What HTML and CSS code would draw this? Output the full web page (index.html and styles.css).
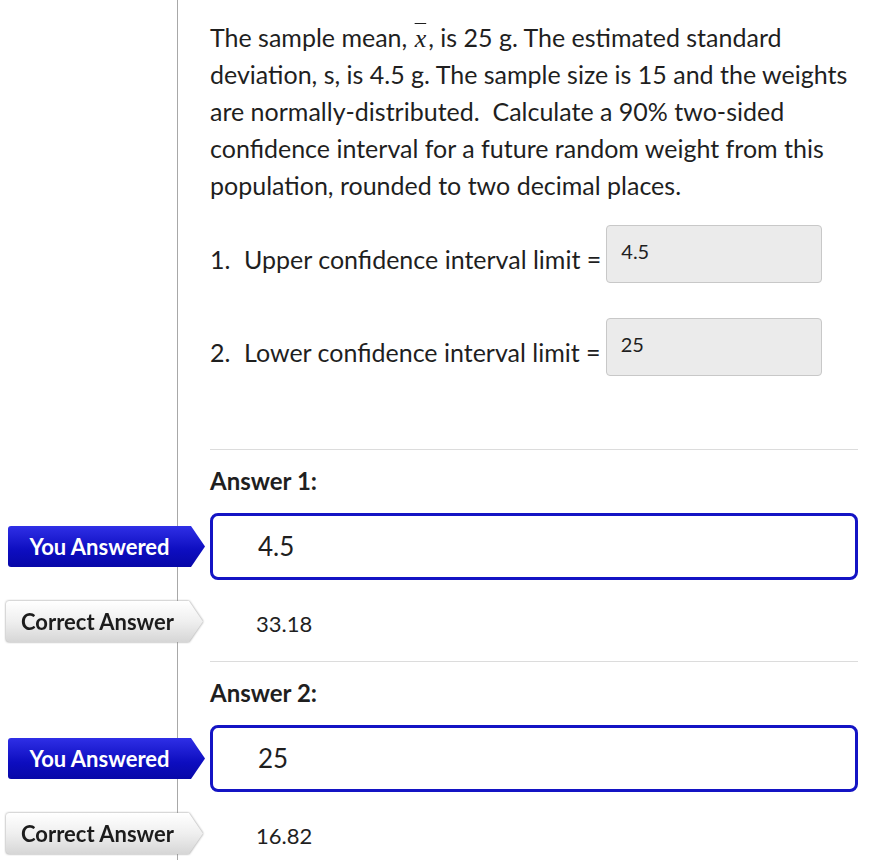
FILE: index.html
```html
<!DOCTYPE html>
<html lang="en">
<head>
    <meta charset="UTF-8">
    <meta name="viewport" content="width=device-width, initial-scale=1.0">
    <title>Quiz Results</title>
    <link rel="stylesheet" href="styles.css">
</head>
<body>
    <div class="quiz">
        <div class="question">
            <p class="prompt">The sample mean, <span class="xbar">x</span>, is 25 g. The estimated standard deviation, s, is 4.5 g. The sample size is 15 and the weights are normally-distributed.&nbsp; Calculate a 90% two-sided confidence interval for a future random weight from this population, rounded to two decimal places.</p>

            <div class="item">
                <span class="num">1.</span>
                <span class="label">Upper confidence interval limit =</span>
                <div class="blank">4.5</div>
            </div>
            <div class="item second">
                <span class="num">2.</span>
                <span class="label">Lower confidence interval limit =</span>
                <div class="blank">25</div>
            </div>
        </div>

        <div class="answer">
            <h3 class="answer-title">Answer 1:</h3>
            <div class="answer-row">
                <div class="badge-wrap"><div class="badge you">You Answered</div></div>
                <div class="given">4.5</div>
            </div>
            <div class="answer-row correct-row">
                <div class="badge-wrap"><div class="badge correct">Correct Answer</div></div>
                <div class="correct-value">33.18</div>
            </div>
        </div>

        <div class="answer">
            <h3 class="answer-title">Answer 2:</h3>
            <div class="answer-row">
                <div class="badge-wrap"><div class="badge you">You Answered</div></div>
                <div class="given">25</div>
            </div>
            <div class="answer-row correct-row">
                <div class="badge-wrap"><div class="badge correct">Correct Answer</div></div>
                <div class="correct-value">16.82</div>
            </div>
        </div>
    </div>
</body>
</html>
```

FILE: styles.css
```css
body {
    margin: 0;
    background: #fff;
    color: #1f1f1f;
    font-family: Lato, "Liberation Sans", sans-serif;
}

/* gutter line between the badges and the question */
.quiz {
    min-height: 860px;
    background: linear-gradient(#a8a8a8, #a8a8a8) 177px 0 / 1px 100% no-repeat;
}

.question {
    margin-left: 210px;
    width: 648px;
    padding-top: 19px;
    padding-bottom: 73px;
}

.prompt {
    margin: 0;
    font-size: 25px;
    line-height: 37px;
}

/* sample mean symbol */
.xbar {
    font-family: "Liberation Serif", "DejaVu Serif", serif;
    font-style: italic;
    font-size: 26px;
    line-height: 1;
    text-decoration: overline;
    text-decoration-thickness: 1px;
    padding: 0 2px 0 1px;
}

.item {
    display: flex;
    align-items: flex-start;
    margin-top: 21px;
    font-size: 25px;
    line-height: 37px;
}

.item.second {
    margin-top: 35px;
}

.num {
    width: 34px;
    margin-top: 16px;
}

.label {
    margin-top: 16px;
    margin-right: 5px;
}

.blank {
    box-sizing: border-box;
    width: 216px;
    height: 58px;
    padding: 13px 14px;
    background: #ebebeb;
    border: 1px solid #c8c8c8;
    border-radius: 4px;
    font-size: 20px;
    line-height: 24px;
}

.answer {
    padding-bottom: 19px;
}

.answer-title {
    margin: 0 0 17px 210px;
    width: 648px;
    padding-top: 16px;
    border-top: 1px solid #dcdcdc;
    font-size: 24px;
    line-height: 30px;
    font-weight: 700;
}

.answer-row {
    display: grid;
    grid-template-columns: 210px 648px;
    align-items: center;
}

.correct-row {
    margin-top: 21px;
}

.given {
    box-sizing: border-box;
    height: 67px;
    padding-left: 45px;
    border: 3px solid #1414c4;
    border-radius: 8px;
    font-size: 26px;
    line-height: 61px;
}

.correct-value {
    padding: 3px 0 0 46px;
    font-size: 22px;
}

/* arrow shaped labels */
.badge-wrap {
    margin-left: 8px;
    width: 197px;
}

.badge {
    height: 41px;
    line-height: 41px;
    padding-right: 14px;
    text-align: center;
    font-size: 22px;
    font-weight: 700;
    clip-path: polygon(0 0, 183px 0, 100% 50%, 183px 100%, 0 100%);
    border-radius: 3px 0 0 3px;
}

.badge.you {
    color: #fff;
    background: linear-gradient(#2f2fe6, #0d0dbf 60%, #0808a8);
}

.correct-row .badge-wrap {
    margin-left: 6px;
    filter: drop-shadow(0 0 1px #8a8a8a);
}

.badge.correct {
    color: #1c1c1c;
    background: linear-gradient(#ffffff, #efefef 50%, #d6d6d6);
}
```
